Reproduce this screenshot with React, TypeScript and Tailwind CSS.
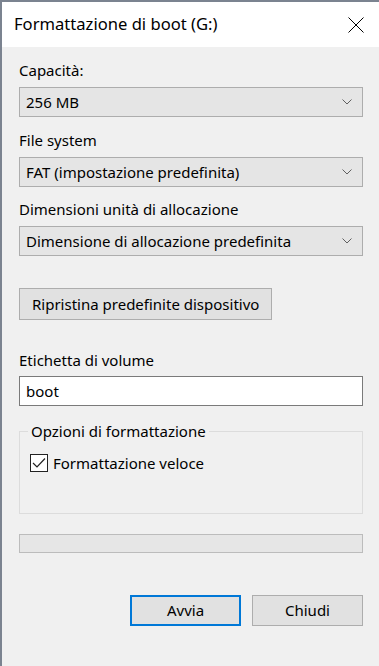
import React from "react";

const Chevron = () => (
  <svg width="10" height="6" viewBox="0 0 10 6" className="shrink-0">
    <path d="M0.5 0.5 L5 5 L9.5 0.5" fill="none" stroke="#606060" strokeWidth="1" />
  </svg>
);

const Select = ({ value }: { value: string }) => (
  <div className="flex h-[30px] items-center justify-between border border-[#adadad] bg-[#e5e5e5] pl-[6px] pr-[10px]">
    <span>{value}</span>
    <Chevron />
  </div>
);

const Label = ({ text, mt }: { text: string; mt: string }) => (
  <p className={`h-[20px] leading-[20px] ${mt}`}>{text}</p>
);

export default function App() {
  return (
    <div className="flex h-[666px] w-[379px] flex-col overflow-hidden border-l-2 border-t-2 border-[#7b8390] bg-[#f0f0f0] font-['Noto_Sans',sans-serif] text-[15px] text-black">
      <div className="flex h-[45px] shrink-0 items-center justify-between bg-white pl-[12px] pr-[15px]">
        <span className="text-[16.6px]">Formattazione di boot (G:)</span>
        <svg width="16" height="16" viewBox="0 0 16 16">
          <path d="M0.5 0.5 L15.5 15.5 M15.5 0.5 L0.5 15.5" stroke="#000" strokeWidth="1" />
        </svg>
      </div>

      <div className="flex flex-col pl-[17px] pr-[16px]">
        <p className="mt-[13px] h-[20px] leading-[20px]">Capacità:</p>
        <div className="mt-[7px]">
          <Select value="256 MB" />
        </div>

        <Label text="File system" mt="mt-[13px]" />
        <div className="mt-[7px]">
          <Select value="FAT (impostazione predefinita)" />
        </div>

        <Label text="Dimensioni unità di allocazione" mt="mt-[12px]" />
        <div className="mt-[7px]">
          <Select value="Dimensione di allocazione predefinita" />
        </div>

        <div className="mt-[32px]">
          <button className="h-[32px] w-[253px] border border-[#adadad] bg-[#e1e1e1] text-left pl-[12px]">
            Ripristina predefinite dispositivo
          </button>
        </div>

        <Label text="Etichetta di volume" mt="mt-[30px]" />
        <div className="mt-[6px] flex h-[30px] items-center border border-[#7a7a7a] bg-white pl-[6px]">
          boot
        </div>

        <fieldset className="mt-[15px] h-[93px] border border-[#dcdcdc] px-[10px]">
          <legend className="ml-[-2px] px-[3px] leading-[20px]">Opzioni di formattazione</legend>
          <label className="mt-[12px] flex items-center gap-[5px]">
            <span className="flex h-[18px] w-[18px] items-center justify-center border border-[#222] bg-white">
              <svg width="14" height="12" viewBox="0 0 14 12">
                <path d="M1 6 L5 10 L13 1.5" fill="none" stroke="#222" strokeWidth="1.2" />
              </svg>
            </span>
            <span className="leading-[20px]">Formattazione veloce</span>
          </label>
        </fieldset>

        <div className="mt-[20px] h-[19px] border border-[#bcbcbc] bg-[#e6e6e6]" />

        <div className="mt-[42px] flex justify-end gap-[11px]">
          <button className="h-[31px] w-[111px] border-2 border-[#0078d7] bg-[#e1e1e1]">Avvia</button>
          <button className="h-[31px] w-[111px] border border-[#adadad] bg-[#e1e1e1]">Chiudi</button>
        </div>
      </div>
    </div>
  );
}
